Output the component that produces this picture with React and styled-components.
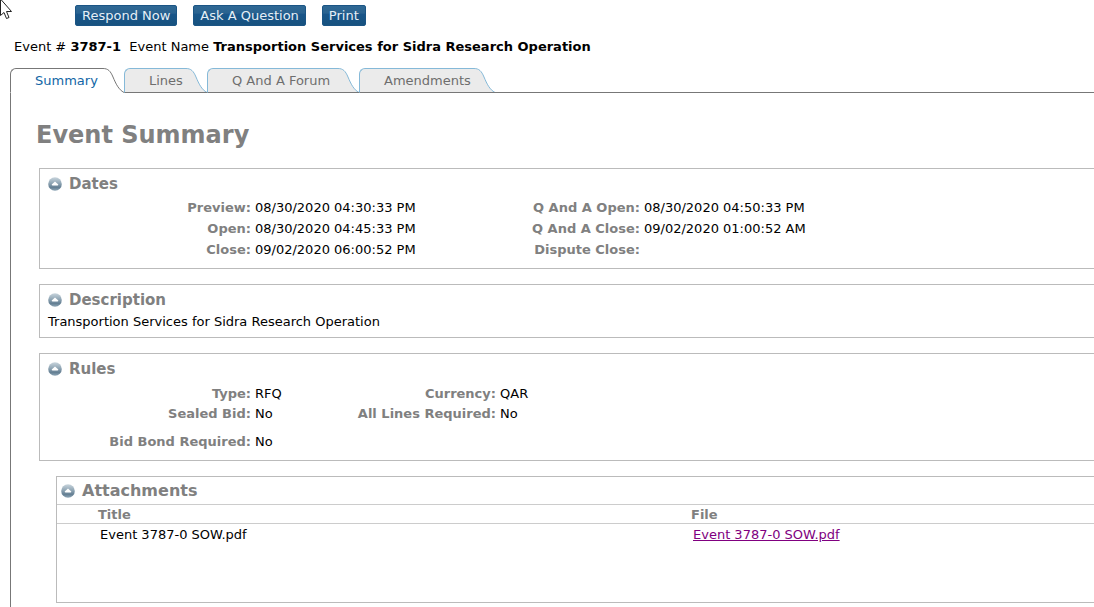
import React, { useState } from "react";
import styled, { createGlobalStyle } from "styled-components";

const GlobalStyle = createGlobalStyle`
  * {
    box-sizing: border-box;
  }

  body {
    margin: 0;
    background-color: #fff;
    color: #000;
    font-family: Verdana, "DejaVu Sans", sans-serif;
    font-size: 13px;
    line-height: 20px;
  }

  button {
    font-family: inherit;
    font-size: inherit;
    cursor: pointer;
  }
`;

const Page = styled.div`
  display: flex;
  flex-direction: column;
  min-height: 100vh;
  padding-left: 10px;
  overflow: hidden;
`;

const Pointer = styled.svg`
  position: absolute;
  top: 0;
  left: 0;
`;

const Toolbar = styled.div`
  display: flex;
  gap: 16px;
  padding: 5px 0 0 65px;
`;

const ActionButton = styled.button`
  height: 21px;
  padding: 0 6px;
  border: 1px solid #1b5585;
  border-radius: 2px;
  background: linear-gradient(#2f6894 0%, #2a6390 38%, #19568a 42%, #17527f 100%);
  color: #e6eff6;
  line-height: 19px;
`;

const EventLine = styled.div`
  padding: 11px 4px;
  white-space: pre;
`;

const TabList = styled.div`
  display: flex;
  height: 25px;
`;

const Tab = styled.button`
  display: flex;
  height: 25px;
  padding: 0;
  border: none;
  background: none;
  color: ${(props) => (props.$active ? "#1166a6" : "#6e6e6e")};
`;

const TabLabel = styled.span`
  min-width: ${(props) => props.$width}px;
  height: 25px;
  padding-left: 24px;
  border: 1px solid ${(props) => (props.$active ? "#777" : "#85b9d8")};
  border-right: none;
  border-bottom-color: ${(props) => (props.$active ? "#fff" : "#777")};
  border-top-left-radius: 6px;
  background-color: ${(props) => (props.$active ? "#fff" : "#ebebeb")};
  line-height: 23px;
  text-align: left;
`;

const TabLine = styled.div`
  flex: 1;
  border-bottom: 1px solid #777;
`;

const Panel = styled.main`
  flex: 1;
  padding: 25px 0 4px 25px;
  border-left: 1px solid #777;
`;

const PageTitle = styled.h1`
  margin: 0 0 16px;
  color: #808080;
  font-size: 24px;
  line-height: 34px;
`;

const Section = styled.section`
  margin: 0 0 15px ${(props) => (props.$nested ? "20px" : "3px")};
  padding-bottom: ${(props) => (props.$nested ? "57px" : "8px")};
  border: 1px solid #bbb;
  border-right: none;
`;

const SectionHeader = styled.div`
  display: flex;
  align-items: center;
  gap: 7px;
  height: ${(props) => (props.$nested ? "27px" : "29px")};
  padding-left: ${(props) => (props.$nested ? "4px" : "8px")};
`;

const ToggleButton = styled.button`
  display: flex;
  padding: 0;
  border: none;
  background: none;
`;

const SectionTitle = styled.h2`
  margin: 0;
  color: #808080;
  font-size: ${(props) => (props.$large ? "16px" : "15px")};
  line-height: 20px;
`;

const FieldGrid = styled.dl`
  display: grid;
  grid-template-columns: ${(props) => props.$first}px 1fr;
  row-gap: ${(props) => (props.$roomy ? "1px" : "0")};
  margin: 0;
  padding-top: ${(props) => (props.$roomy ? "0" : "1px")};
`;

const FieldPair = styled.div`
  display: grid;
  grid-template-columns: ${(props) => props.$label}px 1fr;
  padding-top: ${(props) => (props.$spaced ? "8px" : "0")};
`;

const FieldName = styled.dt`
  color: #808080;
  font-weight: bold;
  text-align: right;
`;

const FieldValue = styled.dd`
  margin: 0;
  padding-left: 4px;
`;

const Description = styled.p`
  margin: 0;
  padding: 0 8px;
  line-height: 15px;
`;

const FileTable = styled.table`
  width: 100%;
  border-collapse: collapse;
  table-layout: fixed;

  th {
    height: 19px;
    padding: 2px 0 0 41px;
    border-top: 1px solid #ccc;
    border-bottom: 1px solid #ccc;
    color: #808080;
    line-height: 16px;
    text-align: left;
  }

  td {
    padding: 1px 0 0 43px;
  }

  th:first-child {
    width: 593px;
  }
`;

const FileLink = styled.a`
  color: #800080;
`;

const tabs = [
  { name: "Summary", width: 90 },
  { name: "Lines", width: 59 },
  { name: "Q And A Forum", width: 128 },
  { name: "Amendments", width: 112 },
];

const dates = [
  ["Preview", "08/30/2020 04:30:33 PM"],
  ["Q And A Open", "08/30/2020 04:50:33 PM"],
  ["Open", "08/30/2020 04:45:33 PM"],
  ["Q And A Close", "09/02/2020 01:00:52 AM"],
  ["Close", "09/02/2020 06:00:52 PM"],
  ["Dispute Close", ""],
];

const rules = [
  ["Type", "RFQ"],
  ["Currency", "QAR"],
  ["Sealed Bid", "No"],
  ["All Lines Required", "No"],
  ["Bid Bond Required", "No", true],
];

function TabCap({ active }) {
  return (
    <svg width="24" height="25" viewBox="0 0 24 25" aria-hidden="true">
      <path
        d="M0 .5H3C8 .5 10.5 3 13 9C16 16 18.5 21.5 24 24.5H0Z"
        fill={active ? "#fff" : "#ebebeb"}
      />
      <path
        d="M0 .5H3C8 .5 10.5 3 13 9C16 16 18.5 21.5 24 24.5"
        fill="none"
        stroke={active ? "#777" : "#85b9d8"}
      />
      {!active && <path d="M0 24.5H24" stroke="#777" />}
    </svg>
  );
}

function CollapseIcon() {
  return (
    <svg width="14" height="14" viewBox="0 0 14 14" aria-hidden="true">
      <defs>
        <linearGradient id="ball" x1="0" y1="0" x2="0" y2="1">
          <stop offset="0" stopColor="#c9d5dd" />
          <stop offset="0.45" stopColor="#8fa5b4" />
          <stop offset="0.75" stopColor="#647f93" />
          <stop offset="1" stopColor="#8fa7b7" />
        </linearGradient>
      </defs>
      <circle cx="7" cy="7" r="6.8" fill="url(#ball)" />
      <path d="M7 4.5L10.3 7.5Q10.3 8.5 9.3 8.5H4.7Q3.7 8.5 3.7 7.5Z" fill="#fff" />
    </svg>
  );
}

function SectionBox({ title, nested, large, children }) {
  const [open, setOpen] = useState(true);

  return (
    <Section $nested={nested}>
      <SectionHeader $nested={nested}>
        <ToggleButton
          aria-label={`Toggle ${title}`}
          aria-expanded={open}
          onClick={() => setOpen(!open)}
        >
          <CollapseIcon />
        </ToggleButton>
        <SectionTitle $large={large}>{title}</SectionTitle>
      </SectionHeader>
      {open && children}
    </Section>
  );
}

function FieldList({ fields, first, second, roomy }) {
  return (
    <FieldGrid $first={first} $roomy={roomy}>
      {fields.map(([name, value, spaced], index) => (
        <FieldPair
          key={name}
          $label={index % 2 === 0 ? 211 : second}
          $spaced={spaced}
        >
          <FieldName>{name}:</FieldName>
          <FieldValue>{value}</FieldValue>
        </FieldPair>
      ))}
    </FieldGrid>
  );
}

function App() {
  const [activeTab, setActiveTab] = useState("Summary");

  return (
    <Page>
      <GlobalStyle />
      <Pointer width="13" height="20" viewBox="0 0 13 20" aria-hidden="true">
        <path
          d="M.5 -1V15.5L4 12.5L6.5 18.5L9 17.5L6.5 11.5H11.5Z"
          fill="#fff"
          stroke="#222"
        />
      </Pointer>
      <Toolbar>
        <ActionButton>Respond Now</ActionButton>
        <ActionButton>Ask A Question</ActionButton>
        <ActionButton>Print</ActionButton>
      </Toolbar>
      <EventLine>
        Event # <b>3787-1</b>{"  "}Event Name{" "}
        <b>Transportion Services for Sidra Research Operation</b>
      </EventLine>
      <TabList role="tablist">
        {tabs.map(({ name, width }) => (
          <Tab
            key={name}
            role="tab"
            aria-selected={name === activeTab}
            $active={name === activeTab}
            onClick={() => setActiveTab(name)}
          >
            <TabLabel $active={name === activeTab} $width={width}>
              {name}
            </TabLabel>
            <TabCap active={name === activeTab} />
          </Tab>
        ))}
        <TabLine />
      </TabList>
      <Panel>
        <PageTitle>Event Summary</PageTitle>
        <SectionBox title="Dates">
          <FieldList fields={dates} first={389} second={211} roomy />
        </SectionBox>
        <SectionBox title="Description">
          <Description>
            Transportion Services for Sidra Research Operation
          </Description>
        </SectionBox>
        <SectionBox title="Rules">
          <FieldList fields={rules} first={315} second={141} />
        </SectionBox>
        <SectionBox title="Attachments" nested large>
          <FileTable>
            <thead>
              <tr>
                <th>Title</th>
                <th>File</th>
              </tr>
            </thead>
            <tbody>
              <tr>
                <td>Event 3787-0 SOW.pdf</td>
                <td>
                  <FileLink href="#sow">Event 3787-0 SOW.pdf</FileLink>
                </td>
              </tr>
            </tbody>
          </FileTable>
        </SectionBox>
      </Panel>
    </Page>
  );
}

export default App;
